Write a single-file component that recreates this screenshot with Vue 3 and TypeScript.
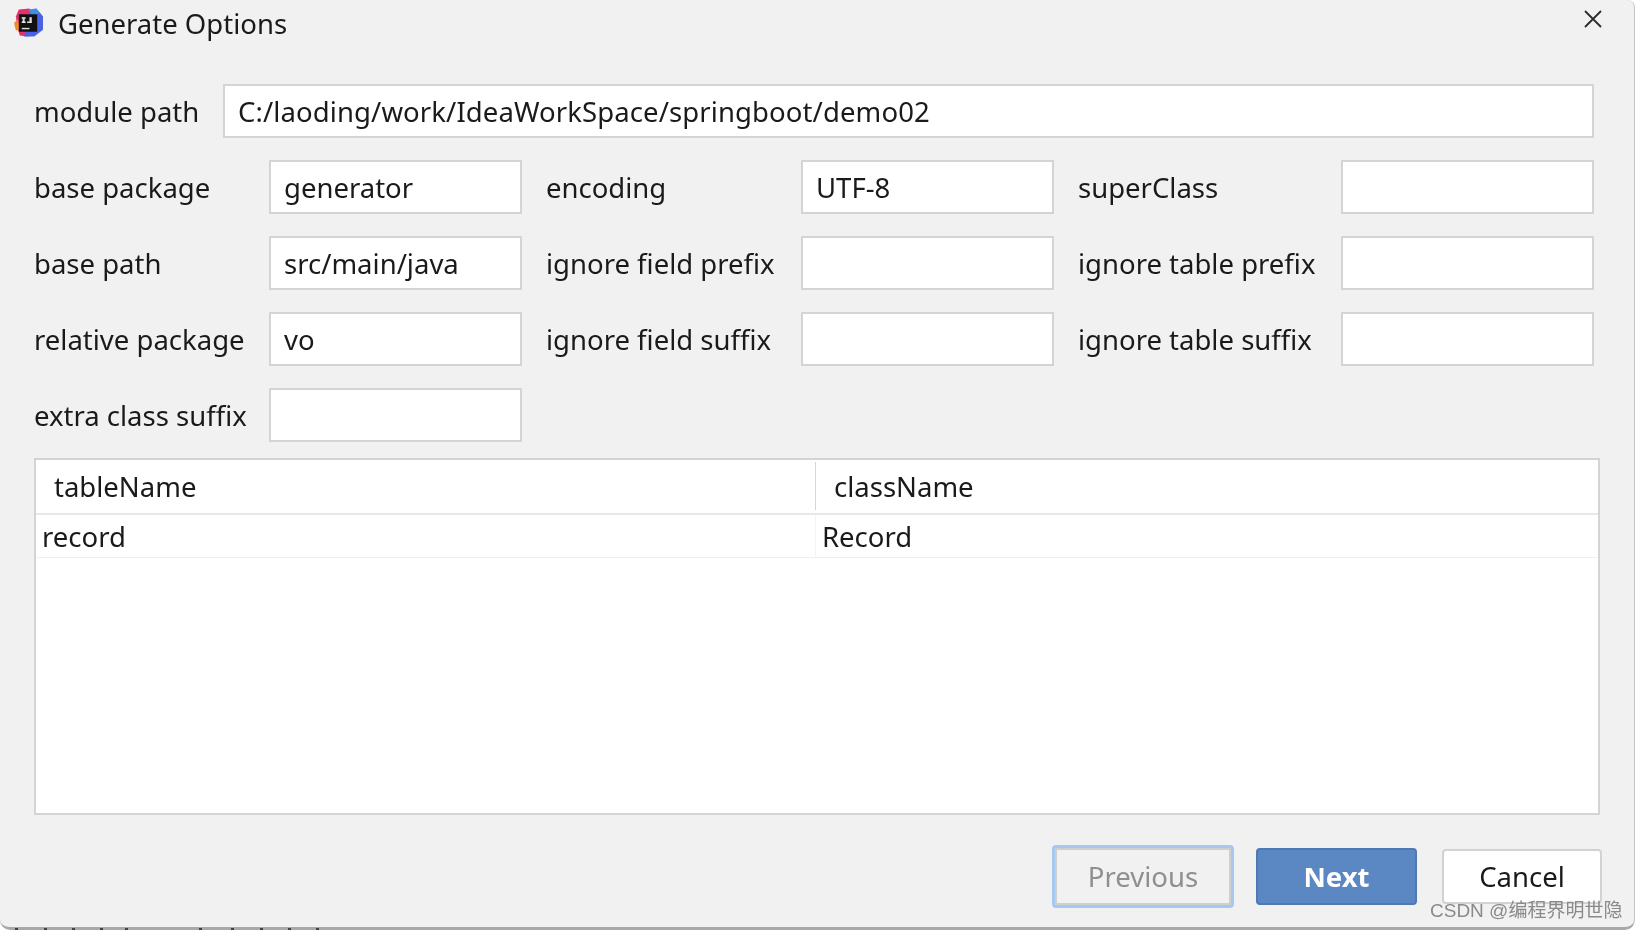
<template>
  <div class="page">
    <div class="dialog">
      <header class="titlebar">
        <svg class="logo" viewBox="0 0 30 30" aria-hidden="true">
          <path d="M2 8 L5 1 L16 0 L21 6 L15 29 L6 28 L3 18 Z" fill="#e3306f" />
          <path d="M0 15 L4 11 L6 21 L2 23 Z" fill="#f58a2b" />
          <path d="M16 3 L23 0 L30 8 L30 22 L21 29 L10 29 L18 14 Z" fill="#4a62e6" />
          <path d="M15 1 L23 0 L27 5 L18 7 Z" fill="#3f8fe2" />
          <rect x="5" y="6" width="19" height="18" fill="#111" />
          <rect x="8" y="9" width="4" height="1.6" fill="#eee" />
          <rect x="9" y="10" width="2" height="4" fill="#ddd" />
          <rect x="8" y="13.4" width="4" height="1.6" fill="#eee" />
          <rect x="16" y="9" width="2.4" height="6" fill="#ddd" />
          <rect x="13.5" y="13.4" width="4.5" height="1.6" fill="#ddd" />
          <rect x="8" y="20" width="8" height="1.5" fill="#ddd" />
        </svg>
        <span class="title">Generate Options</span>
        <svg class="close" viewBox="0 0 18 18" aria-hidden="true">
          <path d="M1 1 L17 17 M17 1 L1 17" stroke="#2b2b2b" stroke-width="1.8" fill="none" />
        </svg>
      </header>

      <div class="module-row">
        <label class="label module-label">module path</label>
        <input class="field module-field" :value="modulePath" readonly />
      </div>

      <div class="form-grid">
        <template v-for="cell in cells" :key="cell.label">
          <label class="label" :class="{ indent: cell.indent }">{{ cell.label }}</label>
          <input class="field" :value="cell.value" readonly />
        </template>
      </div>

      <div class="table">
        <div class="table-head">
          <div class="head-cell first">tableName</div>
          <div class="head-cell">className</div>
        </div>
        <div class="table-row">
          <div class="cell first">record</div>
          <div class="cell">Record</div>
        </div>
      </div>

      <footer class="buttons">
        <button class="btn previous">Previous</button>
        <button class="btn next">Next</button>
        <button class="btn cancel">Cancel</button>
      </footer>
      <span class="watermark">CSDN @编程界明世隐</span>
      <i v-for="x in ticks" :key="x" class="tick" :style="{ left: x + 'px' }" />
    </div>
  </div>
</template>

<script setup lang="ts">
interface Cell {
  label: string
  value: string
  indent?: boolean
}

const modulePath = 'C:/laoding/work/IdeaWorkSpace/springboot/demo02'

const cells: Cell[] = [
  { label: 'base package', value: 'generator' },
  { label: 'encoding', value: 'UTF-8', indent: true },
  { label: 'superClass', value: '', indent: true },
  { label: 'base path', value: 'src/main/java' },
  { label: 'ignore field prefix', value: '', indent: true },
  { label: 'ignore table prefix', value: '', indent: true },
  { label: 'relative package', value: 'vo' },
  { label: 'ignore field suffix', value: '', indent: true },
  { label: 'ignore table suffix', value: '', indent: true },
  { label: 'extra class suffix', value: '' },
]

// tops of the text cut off under the dialog
const ticks = [15, 44, 72, 100, 125, 199, 231, 260, 288, 316]
</script>

<style>
html,
body {
  margin: 0;
  background: #fff;
  overflow: hidden;
}
</style>

<style scoped>
.page {
  width: 1636px;
  height: 930px;
  overflow: hidden;
}

.dialog {
  position: relative;
  box-sizing: border-box;
  width: 1635px;
  height: 930px;
  padding: 0 0 0 34px;
  background: #f1f1f1;
  border-right: 1px solid #c4c4c4;
  border-bottom: 3px solid #a8a8a8;
  border-radius: 0 8px 10px 10px;
  font-family: "Noto Sans", "Noto Sans CJK SC", sans-serif;
  font-size: 27.5px;
  color: #1a1a1a;
  filter: blur(0.4px);
}

.titlebar {
  display: flex;
  align-items: center;
  height: 46px;
  margin-bottom: 38px;
  margin-left: -20px;
}

.logo {
  width: 29px;
  height: 30px;
  margin-right: 15px;
}

.close {
  position: absolute;
  top: 10px;
  left: 1584px;
  width: 18px;
  height: 18px;
}

.module-row {
  display: flex;
  margin-bottom: 22px;
}

.module-label {
  width: 189px;
}

.module-field {
  width: 1371px;
  letter-spacing: 0.1px;
}

.form-grid {
  display: grid;
  grid-template-columns: 235px 253px 279px 253px 287px 253px;
  grid-auto-rows: 54px;
  row-gap: 22px;
}

.label {
  display: flex;
  align-items: center;
  height: 54px;
  white-space: nowrap;
}

.indent {
  padding-left: 24px;
}

.field {
  box-sizing: border-box;
  height: 54px;
  padding: 0 13px;
  background: #fff;
  border: 2px solid #d4d4d4;
  outline: none;
  font: inherit;
  color: #1a1a1a;
}

.table {
  box-sizing: border-box;
  width: 1566px;
  height: 357px;
  margin-top: 16px;
  background: #fff;
  border: 2px solid #d4d4d4;
}

.table-head {
  display: grid;
  grid-template-columns: 780px 1fr;
  height: 53px;
  border-bottom: 2px solid #e8e8e8;
}

.head-cell {
  display: flex;
  align-items: center;
  height: 48px;
  margin-top: 2px;
  padding-left: 18px;
}

.head-cell.first {
  border-right: 1px solid #d6d6d6;
}

.table-row {
  display: grid;
  grid-template-columns: 780px 1fr;
  height: 42px;
  border-bottom: 1px solid #f0f0f0;
}

.cell {
  display: flex;
  align-items: center;
  padding-left: 6px;
}

.cell.first {
  border-right: 1px solid #f4f4f4;
}

.buttons {
  position: absolute;
  top: 845px;
  left: 1052px;
  display: flex;
  align-items: center;
}

.btn {
  box-sizing: border-box;
  font: inherit;
  padding: 0;
  border-radius: 4px;
}

.previous {
  width: 182px;
  height: 63px;
  margin-right: 22px;
  background: #f1f1f1;
  border: 3px solid #a6c8f0;
  box-shadow: inset 0 0 0 2px #cfcfcf;
  color: #8f8f8f;
}

.next {
  width: 161px;
  height: 57px;
  margin-right: 25px;
  background: #5b87c2;
  border: 2px solid #4f79b2;
  color: #fff;
  font-weight: 700;
}

.cancel {
  width: 160px;
  height: 55px;
  background: #fff;
  border: 2px solid #d2d2d2;
  color: #1a1a1a;
}

.watermark {
  position: absolute;
  top: 898px;
  left: 1430px;
  font-size: 19px;
  line-height: 26px;
  font-family: "Liberation Sans", "Noto Sans CJK SC", sans-serif;
  color: #8a8a8a;
  white-space: nowrap;
}

.tick {
  position: absolute;
  bottom: -3px;
  width: 3px;
  height: 2px;
  background: #3a4252;
}
</style>
